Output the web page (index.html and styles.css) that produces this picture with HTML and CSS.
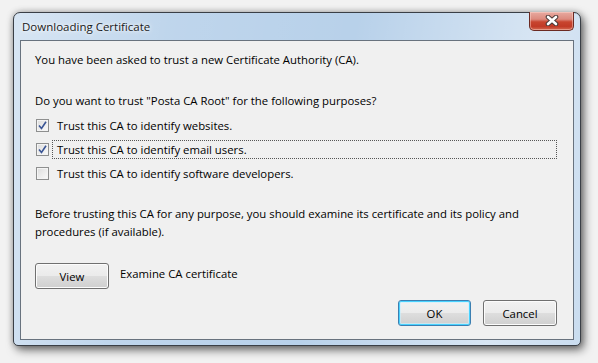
FILE: index.html
```html
<!DOCTYPE html>
<html>
<head>
<meta charset="utf-8">
<link rel="stylesheet" href="styles.css">
</head>
<body>
<div class="window">
  <div class="titlebar">
    <span class="title">Downloading Certificate</span>
    <div class="close">
      <svg width="14" height="11" viewBox="0 0 14 11">
        <path d="M3 2 L11 9 M11 2 L3 9" stroke="#4a3a38" stroke-width="4.6" stroke-linecap="round"/>
        <path d="M3 2 L11 9 M11 2 L3 9" stroke="#ffffff" stroke-width="2.6" stroke-linecap="round"/>
      </svg>
    </div>
  </div>
  <div class="client">
    <p class="intro">You have been asked to trust a new Certificate Authority (CA).</p>
    <p class="question">Do you want to trust "Posta CA Root" for the following purposes?</p>
    <div class="checks">
      <div class="row">
        <span class="box checked"><svg width="9" height="9" viewBox="0 0 9 9"><path d="M1 4.5 L3.5 7.5 L8 0.8" fill="none" stroke="#3a5595" stroke-width="1.6"/></svg></span>
        <span class="label">Trust this CA to identify websites.</span>
      </div>
      <div class="row">
        <span class="box checked"><svg width="9" height="9" viewBox="0 0 9 9"><path d="M1 4.5 L3.5 7.5 L8 0.8" fill="none" stroke="#3a5595" stroke-width="1.6"/></svg></span>
        <span class="label focus">Trust this CA to identify email users.</span>
      </div>
      <div class="row">
        <span class="box"></span>
        <span class="label">Trust this CA to identify software developers.</span>
      </div>
    </div>
    <p class="before">Before trusting this CA for any purpose, you should examine its certificate and its policy and procedures (if available).</p>
    <div class="viewrow">
      <button class="btn view">View</button>
      <span class="examine">Examine CA certificate</span>
    </div>
    <div class="actions">
      <button class="btn default">OK</button>
      <button class="btn">Cancel</button>
    </div>
  </div>
</div>
</body>
</html>
```
FILE: styles.css
```css
html, body {
  margin: 0;
  padding: 0;
}
body {
  width: 598px;
  height: 363px;
  background: #f2f2f2;
  font-family: "Open Sans", "Noto Sans", sans-serif;
  font-size: 11.35px;
  color: #000;
  padding: 12px 0 0 13px;
  box-sizing: border-box;
  overflow: hidden;
}
.window {
  width: 568px;
  box-sizing: border-box;
  border: 1px solid #3a3f46;
  border-radius: 7px 7px 5px 5px;
  padding: 0 6px 5px 6px;
  background:
    linear-gradient(100deg, rgba(255,255,255,0.45) 0%, rgba(255,255,255,0.1) 25%, rgba(255,255,255,0) 55%, rgba(255,255,255,0.45) 85%, rgba(255,255,255,0.25) 100%),
    #b8d1ea;
  box-shadow: 3px 4px 10px rgba(0,0,0,0.55), 0 0 6px rgba(0,0,0,0.25);
}
.titlebar {
  height: 27px;
  display: flex;
  justify-content: space-between;
  align-items: flex-start;
}
.title {
  font-family: "Open Sans", "Noto Sans", sans-serif;
  font-size: 11.5px;
  color: #1a1a1a;
  margin: 6px 0 0 2px;
  text-shadow: 0 0 6px rgba(255,255,255,0.9), 0 0 3px rgba(255,255,255,0.9);
}
.close {
  width: 45px;
  height: 19px;
  margin-top: -1px;
  box-sizing: border-box;
  border: 1px solid #6b2a22;
  border-top: none;
  border-radius: 0 0 5px 5px;
  background: linear-gradient(#e8aaa0 0%, #dc8a7e 40%, #c8452f 55%, #c13a26 80%, #d46a52 100%);
  box-shadow: inset 0 0 0 1px rgba(255,220,210,0.45);
  display: flex;
  align-items: center;
  justify-content: center;
}
.close svg { display: block; margin-top: -1px; }
.client {
  border: 1px solid #68727e;
  background: #f0f0f0;
  height: 300px;
  box-sizing: border-box;
  padding: 11px 16px 0 14px;
  line-height: 15px;
}
p { margin: 0; }
.question { margin-top: 26px; }
.checks {
  margin-top: 8px;
  display: flex;
  flex-direction: column;
  gap: 5px;
}
.row {
  display: flex;
  align-items: center;
  height: 19px;
}
.box {
  width: 13px;
  height: 13px;
  box-sizing: border-box;
  border: 1px solid #8e8f8f;
  background: linear-gradient(135deg, #dcdcdc, #fbfbfb);
  box-shadow: inset 0 0 0 1px #f4f4f4;
  margin-left: 1px;
  display: flex;
  align-items: center;
  justify-content: center;
}
.label {
  margin-left: 3px;
  padding-left: 4px;
  flex: 1;
  height: 19px;
  line-height: 18px;
  box-sizing: border-box;
  border: 1px solid transparent;
}
.label.focus {
  border: 1px dotted #555;
}
.before {
  margin-top: 22px;
  line-height: 18px;
  width: 520px;
}
.viewrow {
  margin-top: 22px;
  display: flex;
  align-items: flex-start;
}
.examine {
  margin: 3px 0 0 11px;
}
.btn {
  font-family: "Open Sans", "Noto Sans", sans-serif;
  font-size: 11.35px;
  color: #000;
  width: 74px;
  height: 26px;
  box-sizing: border-box;
  border: 1px solid #707070;
  border-radius: 3px;
  background: linear-gradient(#f2f2f2 0%, #ebebeb 48%, #dddddd 52%, #cfcfcf 100%);
  box-shadow: inset 0 0 0 1px #fcfcfc;
  padding: 1px 0 0 0;
}
.actions {
  margin-top: 11px;
  display: flex;
  justify-content: flex-end;
  gap: 12px;
}
.btn.default {
  width: 73px;
  border-color: #3c7fb1;
  box-shadow: inset 0 0 0 1px #48d2ff, inset 0 0 0 2px rgba(200,240,255,0.6);
}
```
